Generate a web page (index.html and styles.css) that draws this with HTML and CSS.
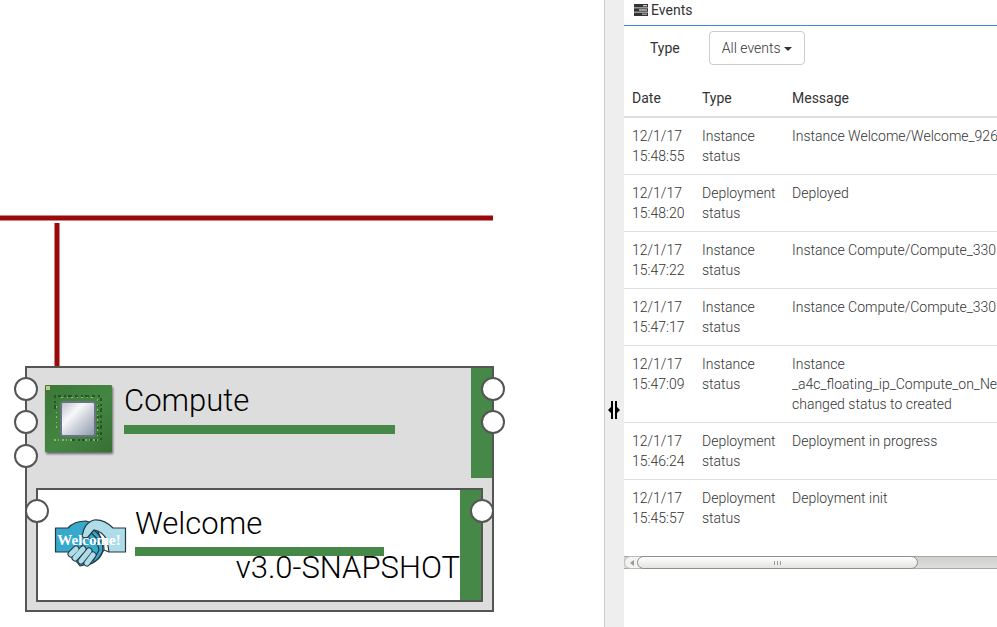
FILE: index.html
```html
<!DOCTYPE html>
<html lang="en">
<head>
<meta charset="utf-8">
<title>Events</title>
<link rel="stylesheet" href="styles.css">
</head>
<body>
<div class="app">
  <main class="canvas">
    <svg class="topology" width="604" height="627" viewBox="0 0 604 627" role="img" aria-label="Topology">
      <defs>
        <linearGradient id="board" x1="0" y1="0" x2="1" y2="1">
          <stop offset="0" stop-color="#3b7735"/><stop offset=".55" stop-color="#438643"/><stop offset="1" stop-color="#376f32"/>
        </linearGradient>
        <linearGradient id="die" x1="0" y1="0" x2="1" y2="1">
          <stop offset="0" stop-color="#b9bfcb"/><stop offset=".35" stop-color="#f7f8fa"/><stop offset=".55" stop-color="#d3d7df"/><stop offset="1" stop-color="#8e98aa"/>
        </linearGradient>
        <filter id="shadow" x="-10%" y="-10%" width="130%" height="130%">
          <feDropShadow dx="1" dy="2" stdDeviation="1" flood-color="#333" flood-opacity=".7"/>
        </filter>
      </defs>

      <path class="network" d="M0 218H493M57 223V367"/>

      <rect class="host" x="26" y="367" width="467" height="244"/>
      <rect class="status" x="471" y="368" width="22" height="110"/>
      <path class="edge" d="M493 367V478"/>
      <g>
        <rect x="45" y="385" width="67" height="67" rx="1" fill="url(#board)" filter="url(#shadow)"/>
        <rect x="46" y="386" width="4" height="4" fill="#c6c68a"/>
        <g fill="none" stroke-width="2" opacity=".8">
          <path stroke="#234a20" d="M58 396H101M101 398V440M55 395V410M72 440H98" stroke-dasharray="3 3 2 2 4 3"/>
          <path stroke="#234a20" d="M98 400V438" stroke-dasharray="1 4 2 4"/>
          <path stroke="#b3c48a" stroke-width="1" d="M61 397.500H96M56.500 406V428M97.500 399V438" stroke-dasharray="2 4 1 3"/>
          <path stroke="#a9bd7c" d="M54 440H74M85 440H100" stroke-dasharray="2 2 1 3"/>
        </g>
        <rect x="61" y="402" width="34" height="34" rx="2" fill="url(#die)" stroke="#66757f" stroke-width="2"/>
      </g>
      <text class="name" x="124" y="411">Compute</text>
      <rect class="status" x="124" y="425" width="271" height="9"/>

      <rect class="hosted" x="37" y="489" width="445" height="112"/>
      <rect class="status" x="460" y="490" width="22" height="110"/>
      <path class="edge" d="M482 489V601"/>
      <g stroke="#26383f" stroke-width="1.200" stroke-linejoin="round">
        <path fill="#36a9cc" d="M55.500 528H68Q74 521 86 521L95 524L103 544Q102 559 92 563L80 566L69 552H55.500Z"/>
        <path fill="#36a9cc" d="M90 532L102 543Q105 552 99 558Q93 564 87 565L78 552Z"/>
        <path fill="#aedde9" d="M125.500 528H113Q104 519 94 520Q87 522 84 529L82 536Q84 539 88 537L94 530Q102 531 107 540L109 552H125.500Z"/>
        <path fill="none" d="M94 530Q105 539 104 550L98 559M89 538Q98 541 99 550L93 561M104 550L109 552"/>
        <g stroke="#26383f" stroke-width="7" stroke-linecap="round"><path d="M71 554L76 549M75 558L83 549M81 561L89 551M87 563L93 555"/></g>
        <g stroke="#aedde9" stroke-width="5" stroke-linecap="round"><path d="M71 554L76 549M75 558L83 549M81 561L89 551M87 563L93 555"/></g>
      </g>
      <text class="banner" x="89" y="545" text-anchor="middle">Welcome!</text>
      <text class="name" x="135" y="534">Welcome</text>
      <rect class="status" x="135" y="547" width="249" height="9"/>
      <text class="name" x="460" y="578" text-anchor="end">v3.0-SNAPSHOT</text>

      <g class="ports">
        <circle cx="26" cy="389" r="11"/><circle cx="26" cy="422" r="11"/><circle cx="26" cy="456" r="11"/>
        <circle cx="493" cy="389" r="11"/><circle cx="493" cy="422" r="11"/>
        <circle cx="37" cy="511" r="11"/><circle cx="482" cy="511" r="11"/>
      </g>
      <path class="edge" d="M493 497V525"/>
    </svg>
  </main>

  <div class="splitter">
    <svg width="12" height="20" viewBox="0 0 12 20" aria-hidden="true"><path d="M3 1H5V19H3V13L0 10L3 7ZM7 1H9V7L12 10L9 13V19H7Z"/></svg>
  </div>

  <aside class="events">
    <h1 class="title">
      <svg width="14" height="12" viewBox="0 0 14 12" aria-hidden="true"><path fill="#333" d="M0 0H14V3.500H0ZM0 4.200H14V7.700H0ZM0 8.400H14V12H0Z"/><path fill="#fff" d="M9 1.300H13V2.200H9ZM5 5.500H13V6.400H5ZM8 9.700H13V10.600H8Z"/></svg>
      Events
    </h1>
    <div class="filter">
      <label for="type">Type</label>
      <span class="picker">
        <select id="type"><option>All events</option></select>
        <svg class="caret" width="8" height="4" viewBox="0 0 8 4" aria-hidden="true"><path fill="#333" d="M0 0H8L4 4Z"/></svg>
      </span>
    </div>
    <div class="scroller">
      <table>
        <thead><tr><th class="date">Date</th><th class="type">Type</th><th>Message</th></tr></thead>
        <tbody>
          <tr><td>12/1/17 15:48:55</td><td>Instance status</td><td>Instance Welcome/Welcome_926</td></tr>
          <tr><td>12/1/17 15:48:20</td><td>Deployment status</td><td>Deployed</td></tr>
          <tr><td>12/1/17 15:47:22</td><td>Instance status</td><td>Instance Compute/Compute_330</td></tr>
          <tr><td>12/1/17 15:47:17</td><td>Instance status</td><td>Instance Compute/Compute_330</td></tr>
          <tr><td>12/1/17 15:47:09</td><td>Instance status</td><td>Instance<br>_a4c_floating_ip_Compute_on_Ne<br>changed status to created</td></tr>
          <tr><td>12/1/17 15:46:24</td><td>Deployment status</td><td>Deployment in progress</td></tr>
          <tr><td>12/1/17 15:45:57</td><td>Deployment status</td><td>Deployment init</td></tr>
        </tbody>
      </table>
    </div>
    <div class="scrollbar" aria-hidden="true">
      <span class="arrow"><svg width="4" height="6" viewBox="0 0 4 6"><path fill="#999" d="M4 0V6L0 3Z"/></svg></span>
      <span class="thumb"><i></i><i></i><i></i></span>
    </div>
  </aside>
</div>
</body>
</html>
```
FILE: styles.css
```css
* { box-sizing: border-box; }

body {
  margin: 0;
  overflow: hidden;
  background: #fff;
  color: #333;
  font: 300 14px/20px Roboto, "Liberation Sans", sans-serif;
}

.app {
  display: grid;
  grid-template-columns: minmax(0, 1fr) 20px minmax(0, 373px);
  min-height: 100vh;
}

.canvas { min-width: 0; overflow: hidden; }
.topology { display: block; }
.network { fill: none; stroke: #9b0a0a; stroke-width: 5; }
.host { fill: #ddd; stroke: #555; stroke-width: 2; }
.hosted { fill: #fff; stroke: #555; stroke-width: 2; }
.edge { fill: none; stroke: #555; stroke-width: 2; }
.status { fill: #468847; }
.name { fill: #000; font-size: 31px; font-weight: 300; }
.banner { fill: #fff; font: 700 15px "Liberation Serif", serif; }
.ports { fill: #fff; stroke: #555; stroke-width: 2; }

.splitter {
  display: flex;
  justify-content: center;
  padding-top: 400px;
  background: #eee;
  box-shadow: inset 1px 0 #ccc;
}

.events { min-width: 0; overflow: hidden; }

.title {
  display: flex;
  align-items: center;
  gap: 3px;
  height: 26px;
  margin: 0;
  padding: 0 10px 6px;
  border-bottom: 1px solid #428bca;
  font-size: 14px;
  font-weight: 400;
}

.filter {
  display: flex;
  align-items: center;
  gap: 29px;
  margin: 5px 0 15px;
  padding-left: 26px;
  font-weight: 400;
}

.picker { position: relative; }

select {
  display: block;
  height: 34px;
  width: 96px;
  padding: 6px 12px;
  appearance: none;
  border: 1px solid #ccc;
  border-radius: 4px;
  background: #fff;
  color: #333;
  font: inherit;
  font-weight: 300;
}

.caret {
  position: absolute;
  right: 13px;
  top: 16px;
  pointer-events: none;
}

.scroller { overflow: hidden; }

table {
  width: 500px;
  table-layout: fixed;
  border-spacing: 0;
}

.date { width: 70px; }
.type { width: 90px; }

th {
  padding: 8px;
  border-bottom: 2px solid #ddd;
  font-weight: 400;
  text-align: left;
}

td {
  padding: 8px;
  border-top: 1px solid #ddd;
  vertical-align: top;
}

td:last-child { white-space: nowrap; }
tbody tr:first-child td { border-top: 0; }

.scrollbar {
  display: flex;
  height: 13px;
  margin-top: 20px;
  border: solid #aaa8a4;
  border-width: 1px 0;
  background: linear-gradient(#d0cfcc, #dededb);
}

.arrow {
  display: flex;
  align-items: center;
  justify-content: center;
  width: 20px;
  margin: -1px -7px -1px 0;
  border: 1px solid #bbb;
  border-radius: 7px 0 0 7px;
  background: #f3f3f1;
  padding-right: 5px;
}

.thumb {
  display: flex;
  align-items: center;
  justify-content: center;
  gap: 2px;
  width: 281px;
  margin: -1px 0;
  border: 1px solid #8f8e8b;
  border-radius: 7px;
  background: linear-gradient(#fff, #e4e4e1);
}

.thumb i { width: 1px; height: 4px; background: #999; }
```
